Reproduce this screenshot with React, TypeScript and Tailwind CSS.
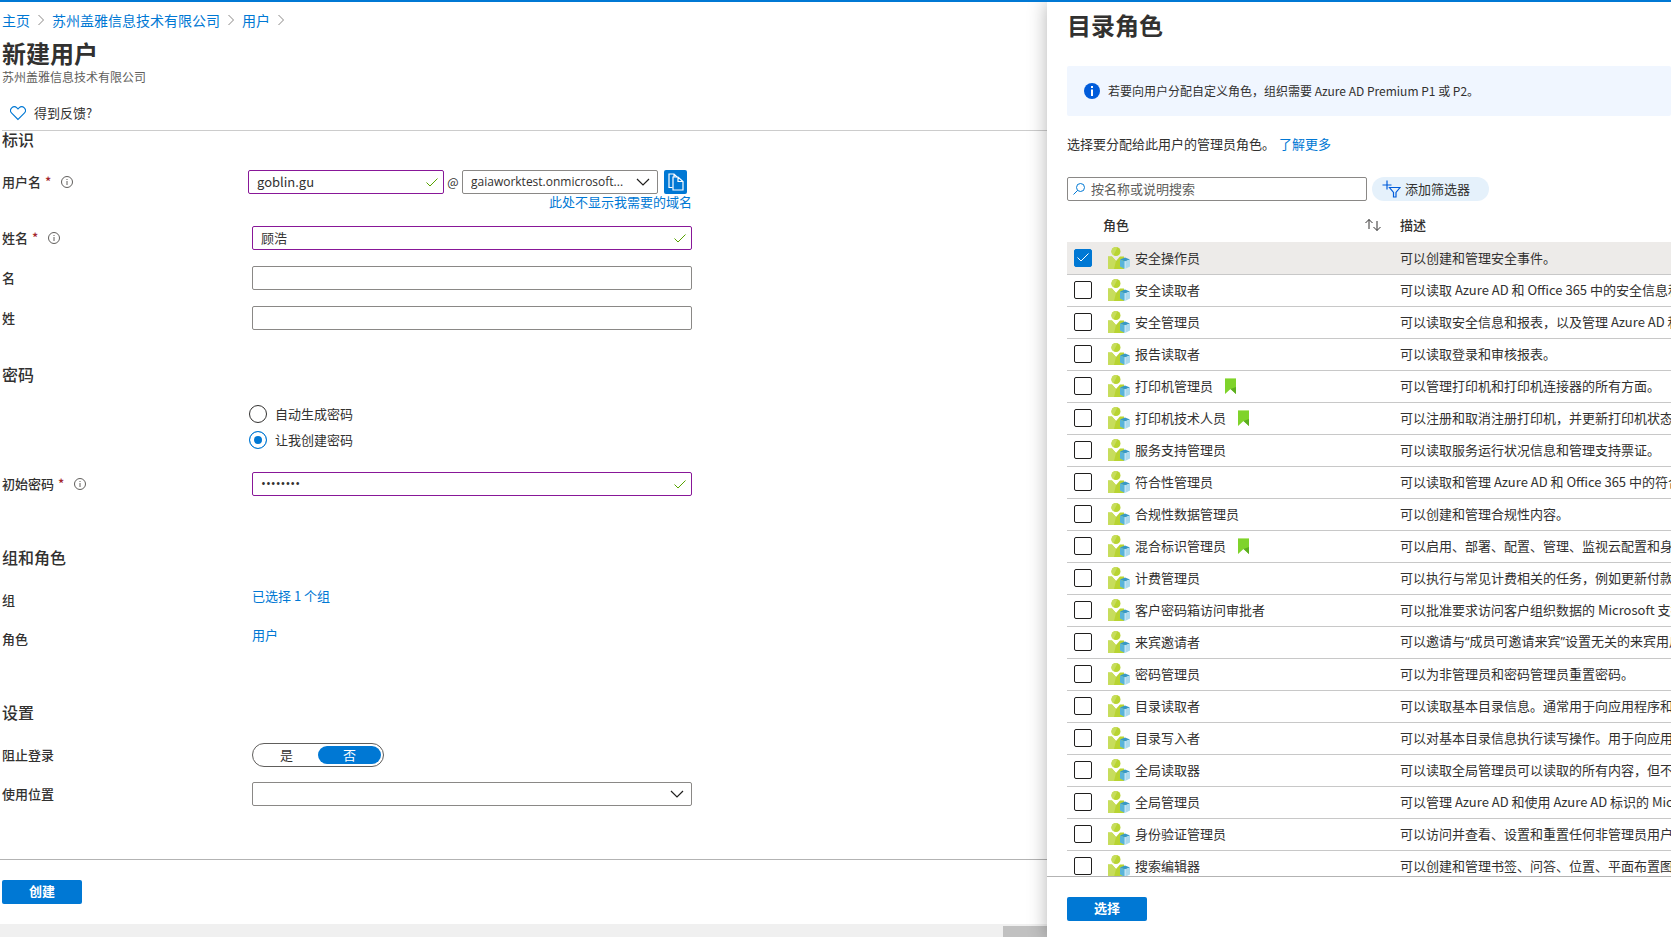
import React, { useState } from 'react';

const roles = [
  { name: '安全操作员', desc: '可以创建和管理安全事件。' },
  { name: '安全读取者', desc: '可以读取 Azure AD 和 Office 365 中的安全信息和报表。' },
  { name: '安全管理员', desc: '可以读取安全信息和报表，以及管理 Azure AD 和 Office 365 中的配置。' },
  { name: '报告读取者', desc: '可以读取登录和审核报表。' },
  { name: '打印机管理员', desc: '可以管理打印机和打印机连接器的所有方面。', preview: true },
  { name: '打印机技术人员', desc: '可以注册和取消注册打印机，并更新打印机状态。', preview: true },
  { name: '服务支持管理员', desc: '可以读取服务运行状况信息和管理支持票证。' },
  { name: '符合性管理员', desc: '可以读取和管理 Azure AD 和 Office 365 中的符合性配置和报表。' },
  { name: '合规性数据管理员', desc: '可以创建和管理合规性内容。' },
  { name: '混合标识管理员', desc: '可以启用、部署、配置、管理、监视云配置和身份验证服务。', preview: true },
  { name: '计费管理员', desc: '可以执行与常见计费相关的任务，例如更新付款信息。' },
  { name: '客户密码箱访问审批者', desc: '可以批准要求访问客户组织数据的 Microsoft 支持请求。' },
  { name: '来宾邀请者', desc: '可以邀请与“成员可邀请来宾”设置无关的来宾用户。', quoted: true },
  { name: '密码管理员', desc: '可以为非管理员和密码管理员重置密码。' },
  { name: '目录读取者', desc: '可以读取基本目录信息。通常用于向应用程序和来宾授予目录读取访问权限。' },
  { name: '目录写入者', desc: '可以对基本目录信息执行读写操作。用于向应用程序授予访问权限。' },
  { name: '全局读取器', desc: '可以读取全局管理员可以读取的所有内容，但不能更新任何内容。' },
  { name: '全局管理员', desc: '可以管理 Azure AD 和使用 Azure AD 标识的 Microsoft 服务的所有方面。' },
  { name: '身份验证管理员', desc: '可以访问并查看、设置和重置任何非管理员用户的身份验证方法信息。' },
  { name: '搜索编辑器', desc: '可以创建和管理书签、问答、位置、平面布置图等编辑内容。' },
];

const Crumb = () => (
  <svg className="w-2 h-3 mx-[7px] text-[#8a8886]" viewBox="0 0 8 12" fill="none" stroke="currentColor">
    <path d="M1.5 1l5 5-5 5" />
  </svg>
);

const InfoIcon = () => (
  <svg className="w-3 h-3 text-[#605e5c]" viewBox="0 0 12 12" fill="none" stroke="currentColor">
    <circle cx="6" cy="6" r="5.5" />
    <path d="M6 5v4M6 3v1" />
  </svg>
);

const Check = () => (
  <svg className="w-3 h-3 shrink-0 text-[#57a300]" viewBox="0 0 12 12" fill="none" stroke="currentColor">
    <path d="M0.5 6.5l3.5 3.5 7.5-7.5" />
  </svg>
);

const Chevron = () => (
  <svg
    className="absolute right-2 top-2 w-3.5 h-2 pointer-events-none text-[#201f1e]"
    viewBox="0 0 14 8"
    fill="none"
    stroke="currentColor"
    strokeWidth="1.2"
  >
    <path d="M1 1l6 6 6-6" />
  </svg>
);

const RoleIcon = () => (
  <svg className="w-[22px] h-[22px] shrink-0" viewBox="0 0 22 22">
    <circle cx="8" cy="4.5" r="4.5" fill="#b8d432" />
    <path d="M8 0a4.5 4.5 0 0 0-2.5 8.3L9.5 0.3A4.5 4.5 0 0 0 8 0z" fill="#c7dd5c" />
    <path d="M0 9.5h4L8 14l4-4.5h4V22H0z" fill="#b8d432" />
    <path d="M0 9.5h4L8 14 6 22H0z" fill="#c7dd5c" />
    <path d="M12 12.5l5-2 5 2-5 2z" fill="#3999c6" />
    <path d="M12 12.5l5 2V22l-5-2.5z" fill="#59b4d9" />
    <path d="M17 14.5l5-2v7L17 22z" fill="#a9d9ee" />
    <path d="M17 14.5V22" stroke="#e6f5fb" strokeWidth="0.8" />
  </svg>
);

const PreviewFlag = () => (
  <svg className="w-[11px] h-4 ml-3" viewBox="0 0 11 16">
    <path d="M0 0h11v16l-5.5-5L0 16z" fill="#7fd32b" />
    <path d="M5.5 11L11 9v7z" fill="#5cae1f" />
    <path d="M0 0h11v1H0z" fill="#b5e67f" />
  </svg>
);

const Required = () => <span className="ml-1 text-[#a4262c]">*</span>;

const textBox = 'flex items-center h-6 border rounded-xs pl-2 pr-[5px]';

const App: React.FC = () => {
  const [selected, setSelected] = useState<string[]>(['安全操作员']);
  const [block, setBlock] = useState(false);

  const toggleRole = (name: string) => {
    setSelected(selected.includes(name) ? selected.filter((n) => n !== name) : [...selected, name]);
  };

  return (
    <div className="h-screen flex flex-col overflow-hidden bg-white text-[#323130] text-[13px] font-['Noto_Sans_CJK_SC',sans-serif]">
      <div className="h-0.5 shrink-0 bg-[#0078d4]" />
      <div className="flex-1 min-h-0 flex overflow-hidden">
        {/* New user */}
        <div className="flex-1 min-w-0 flex flex-col">
          <header className="ml-0.5 pt-2 pb-[5px] border-b border-[#ccc]">
            <nav className="flex items-center h-5 text-sm leading-5 text-[#0078d4]">
              <a href="#home">主页</a>
              <Crumb />
              <a href="#org">苏州盖雅信息技术有限公司</a>
              <Crumb />
              <a href="#users">用户</a>
              <Crumb />
            </nav>
            <h1 className="mt-[9px] text-2xl leading-7 font-semibold">新建用户</h1>
            <p className="mt-0.5 text-xs leading-4 text-[#605e5c]">苏州盖雅信息技术有限公司</p>
            <button className="mt-4 ml-2 h-6 flex items-center gap-2">
              <svg className="w-4 h-4 text-[#0078d4]" viewBox="0 0 16 16" fill="none" stroke="currentColor" strokeWidth="1.1">
                <path d="M8 14.5L1.7 8.2a3.8 3.8 0 0 1 0-5.3 3.7 3.7 0 0 1 5.2 0L8 4l1.1-1.1a3.7 3.7 0 0 1 5.2 0 3.8 3.8 0 0 1 0 5.3z" />
              </svg>
              得到反馈?
            </button>
          </header>

          <main className="flex-1 min-h-0 pl-0.5">
            <h2 className="text-base leading-4 font-medium">标识</h2>
            <div className="mt-[23px] flex flex-col gap-4">
              <div className="flex">
                <label htmlFor="username" className="w-[246px] h-6 flex items-center font-medium">
                  用户名
                  <Required />
                  <span className="ml-2.5">
                    <InfoIcon />
                  </span>
                </label>
                <div className="w-[444px]">
                  <div className="flex items-center">
                    <div className={`${textBox} w-[196px] border-[#881798]`}>
                      <input id="username" className="flex-1 min-w-0 outline-none" defaultValue="goblin.gu" />
                      <Check />
                    </div>
                    <span className="w-[18px] text-center text-xs">@</span>
                    <div className="relative w-[196px]">
                      <select
                        aria-label="域名"
                        className="block w-full h-6 pl-2 pr-6 appearance-none border border-[#8a8886] rounded-xs text-xs font-['Open_Sans',sans-serif]"
                      >
                        <option>gaiaworktest.onmicrosoft...</option>
                      </select>
                      <Chevron />
                    </div>
                    <button aria-label="复制" className="ml-1.5 w-[23px] h-6 flex items-center justify-center rounded-xs bg-[#0078d4] text-white">
                      <svg className="w-4 h-[18px]" viewBox="0 0 16 18" fill="none" stroke="currentColor" strokeWidth="1.2">
                        <path d="M4.5 14.5H1V1h5l3 3M6 1v3" />
                        <path d="M5 4h5l5 4.5V17H5zM10 4v4.5h5" />
                      </svg>
                    </button>
                  </div>
                  <a href="#domain" className="block text-right leading-4 text-[#0078d4]">
                    此处不显示我需要的域名
                  </a>
                </div>
              </div>
              <div className="flex items-center">
                <label htmlFor="fullname" className="w-[250px] flex items-center font-medium">
                  姓名
                  <Required />
                  <span className="ml-2.5">
                    <InfoIcon />
                  </span>
                </label>
                <div className={`${textBox} w-[440px] border-[#881798]`}>
                  <input id="fullname" className="flex-1 outline-none" defaultValue="顾浩" />
                  <Check />
                </div>
              </div>
              <div className="flex items-center">
                <label htmlFor="first" className="w-[250px] font-medium">名</label>
                <input id="first" className="w-[440px] h-6 px-2 border border-[#8a8886] rounded-xs" />
              </div>
              <div className="flex items-center">
                <label htmlFor="last" className="w-[250px] font-medium">姓</label>
                <input id="last" className="w-[440px] h-6 px-2 border border-[#8a8886] rounded-xs" />
              </div>
            </div>

            <h2 className="mt-9 text-base leading-4 font-medium">密码</h2>
            <div className="mt-[23px] ml-[247px] flex flex-col gap-2">
              <label className="flex items-center gap-2 leading-[18px]">
                <input type="radio" name="pwd" className="appearance-none w-[18px] h-[18px] rounded-full border border-[#323130] checked:border-[#0078d4] checked:bg-[#0078d4] checked:shadow-[inset_0_0_0_4px_white]" />
                自动生成密码
              </label>
              <label className="flex items-center gap-2 leading-[18px]">
                <input type="radio" name="pwd" defaultChecked className="appearance-none w-[18px] h-[18px] rounded-full border border-[#323130] checked:border-[#0078d4] checked:bg-[#0078d4] checked:shadow-[inset_0_0_0_4px_white]" />
                让我创建密码
              </label>
            </div>
            <div className="mt-[23px] flex items-center">
              <label htmlFor="password" className="w-[250px] flex items-center font-medium">
                初始密码
                <Required />
                <span className="ml-2.5">
                  <InfoIcon />
                </span>
              </label>
              <div className={`${textBox} w-[440px] border-[#881798]`}>
                <input
                  id="password"
                  type="password"
                  className="flex-1 outline-none font-['Open_Sans',sans-serif]"
                  defaultValue="password"
                />
                <Check />
              </div>
            </div>

            <h2 className="mt-[53px] text-base leading-4 font-medium">组和角色</h2>
            <div className="mt-[23px] flex flex-col gap-[15px]">
              <div className="flex h-6">
                <span className="w-[250px] leading-6 font-medium">组</span>
                <a href="#groups" className="leading-4 text-[#0078d4]">已选择 1 个组</a>
              </div>
              <div className="flex h-6">
                <span className="w-[250px] leading-6 font-medium">角色</span>
                <a href="#roles" className="leading-4 text-[#0078d4]">用户</a>
              </div>
            </div>

            <h2 className="mt-[53px] text-base leading-4 font-medium">设置</h2>
            <div className="mt-[23px] flex flex-col gap-[15px]">
              <div className="flex items-center">
                <span className="w-[250px] font-medium">阻止登录</span>
                <div className="w-[132px] h-6 p-0.5 flex items-center border border-[#605e5c] rounded-full">
                  <button
                    onClick={() => setBlock(true)}
                    className={`flex-1 h-[18px] leading-[18px] rounded-full ${block ? 'bg-[#0078d4] text-white' : ''}`}
                  >
                    是
                  </button>
                  <button
                    onClick={() => setBlock(false)}
                    className={`flex-1 h-[18px] leading-[18px] rounded-full ${block ? '' : 'bg-[#0078d4] text-white'}`}
                  >
                    否
                  </button>
                </div>
              </div>
              <div className="flex items-center">
                <label htmlFor="location" className="w-[250px] font-medium">使用位置</label>
                <div className="relative w-[440px]">
                  <select id="location" className="block w-full h-6 px-2 appearance-none border border-[#8a8886] rounded-xs">
                    <option></option>
                  </select>
                  <Chevron />
                </div>
              </div>
            </div>
          </main>

          <footer className="border-t border-[#b3b3b3] pt-5 pb-5 pl-0.5">
            <button className="block w-20 h-6 pb-0.5 rounded-xs bg-[#0078d4] text-white font-semibold">创建</button>
          </footer>
          <div className="h-[13px] pt-0.5 flex justify-end bg-[#f0f0f0]">
            <div className="w-11 bg-[#c1c1c1]" />
          </div>
        </div>

        {/* Directory roles */}
        <aside className="w-[624px] shrink-0 flex flex-col bg-white shadow-[0_0_18px_rgba(0,0,0,0.3)]">
          <div className="flex-1 min-h-0 pl-5 flex flex-col overflow-hidden">
            <h1 className="mt-[9px] text-2xl leading-7 font-semibold">目录角色</h1>
            <div className="mt-[27px] h-[50px] shrink-0 pl-[17px] flex items-center gap-2 rounded-xs bg-[#f0f6ff] text-xs">
              <svg className="w-4 h-4" viewBox="0 0 16 16">
                <circle cx="8" cy="8" r="8" fill="#015cda" />
                <path d="M7 3h2v2H7zM7 6.5h2V13H7z" fill="#fff" />
              </svg>
              若要向用户分配自定义角色，组织需要 Azure AD Premium P1 或 P2。
            </div>
            <p className="mt-5 leading-4">
              选择要分配给此用户的管理员角色。
              <a href="#more" className="ml-1 text-[#0078d4]">了解更多</a>
            </p>
            <div className="mt-[25px] flex gap-[5px]">
              <label className="w-[300px] h-6 pl-[5px] flex items-center gap-1.5 border border-[#8a8886] rounded-xs">
                <svg className="w-3 h-3 text-[#0078d4]" viewBox="0 0 12 12" fill="none" stroke="currentColor">
                  <circle cx="7.5" cy="4.5" r="4" />
                  <path d="M4.7 7.3L0.5 11.5" />
                </svg>
                <input
                  type="text"
                  aria-label="搜索"
                  placeholder="按名称或说明搜索"
                  className="flex-1 outline-none placeholder:text-[#605e5c]"
                />
              </label>
              <button className="h-6 pl-2.5 pr-[19px] flex items-center gap-1 rounded-full bg-[#e5f1fb]">
                <svg className="w-[19px] h-[18px] text-[#015cda]" viewBox="0 0 19 18" fill="none" stroke="currentColor" strokeWidth="1.2">
                  <path d="M5 0.5v9M0.5 5h9" />
                  <path d="M7.5 7.5H18L14 12.5V17h-2.5v-4.5z" />
                </svg>
                添加筛选器
              </button>
            </div>

            <table className="w-full mt-2 table-fixed text-left">
              <thead>
                <tr className="h-[33px]">
                  <th className="w-9"></th>
                  <th className="w-[297px] pb-0.5 font-medium">
                    <div className="flex items-center justify-between pr-[19px]">
                      角色
                      <button aria-label="排序">
                        <svg className="block w-4 h-3" viewBox="0 0 16 12" fill="none" stroke="currentColor">
                          <path d="M4 10V0.5M0.5 4L4 0.5 7.5 4M12 2v9.5M8.5 8l3.5 3.5L15.5 8" />
                        </svg>
                      </button>
                    </div>
                  </th>
                  <th className="pb-0.5 font-medium">描述</th>
                </tr>
              </thead>
              <tbody>
                {roles.map((role) => (
                  <tr
                    key={role.name}
                    className={`h-8 border-b border-[#c8c8c8] ${selected.includes(role.name) ? 'bg-[#edebe9]' : ''}`}
                  >
                    <td className="pl-[7px]">
                      <div className="relative w-[18px]">
                        <input
                          type="checkbox"
                          aria-label={role.name}
                          checked={selected.includes(role.name)}
                          onChange={() => toggleRole(role.name)}
                          className="peer block appearance-none w-[18px] h-[18px] border border-[#201f1e] rounded-xs checked:bg-[#0078d4] checked:border-[#0078d4]"
                        />
                        <svg
                          className="absolute inset-[3px] w-3 h-3 hidden peer-checked:block pointer-events-none text-white"
                          viewBox="0 0 12 12"
                          fill="none"
                          stroke="currentColor"
                        >
                          <path d="M0.5 5.5l3.5 3.5 7.5-7.5" />
                        </svg>
                      </div>
                    </td>
                    <td className="pl-[5px]">
                      <div className="flex items-center gap-[5px]">
                        <RoleIcon />
                        <span className="flex items-center">
                          {role.name}
                          {role.preview && <PreviewFlag />}
                        </span>
                      </div>
                    </td>
                    {/* curly quotes are full width in the CJK font */}
                    <td
                      className={`whitespace-nowrap overflow-hidden ${
                        role.quoted ? "font-['Open_Sans','Noto_Sans_CJK_SC',sans-serif]" : ''
                      }`}
                    >
                      {role.desc}
                    </td>
                  </tr>
                ))}
              </tbody>
            </table>
          </div>
          <footer className="border-t border-[#b3b3b3] pl-5 pt-5 pb-4">
            <button className="block w-20 h-6 pb-0.5 rounded-xs bg-[#0078d4] text-white font-semibold">选择</button>
          </footer>
        </aside>
      </div>
    </div>
  );
};

export default App;
